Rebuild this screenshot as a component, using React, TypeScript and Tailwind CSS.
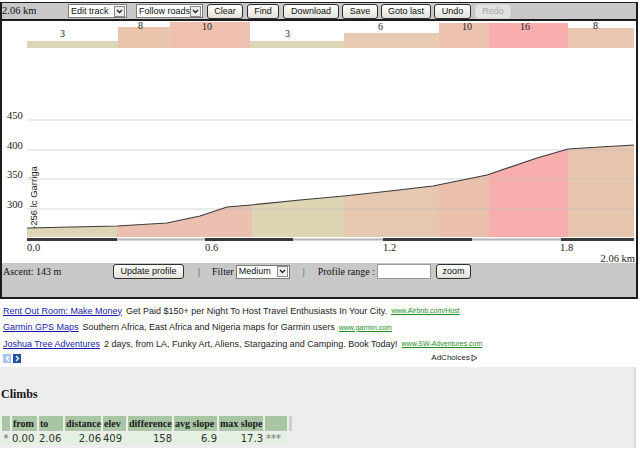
import React from "react";

const serif = "font-['Liberation_Serif','Times_New_Roman',serif]";
const sans = "font-['Liberation_Sans',Arial,sans-serif]";

const bars = [
  { x0: 27, x1: 118, top: 41, label: "3", lx: 60, ly: 37, c: "#ddd5b5" },
  { x0: 118, x1: 170, top: 27, label: "8", lx: 138, ly: 29, c: "#ebc4ae" },
  { x0: 170, x1: 250, top: 22, label: "10", lx: 202, ly: 30, c: "#efbfb0" },
  { x0: 250, x1: 344, top: 41, label: "3", lx: 285, ly: 37, c: "#ddd5b5" },
  { x0: 344, x1: 439, top: 33, label: "6", lx: 378, ly: 30, c: "#e8c9b1" },
  { x0: 439, x1: 489, top: 23, label: "10", lx: 462, ly: 30, c: "#ecc2ae" },
  { x0: 489, x1: 568, top: 23, label: "16", lx: 520, ly: 30, c: "#f9adad" },
  { x0: 568, x1: 634, top: 28, label: "8", lx: 593, ly: 29, c: "#e9c6b0" },
];

const fills: [number, number, string][] = [
  [27, 117, "#ddd5b5"],
  [117, 252, "#ecc0b0"],
  [252, 344, "#ddd5b3"],
  [344, 438, "#e6c8b0"],
  [438, 489, "#ebc1ae"],
  [489, 568, "#f9aeae"],
  [568, 634, "#e7c6af"],
];

const pts: [number, number][] = [
  [27, 228], [117, 226], [167, 223], [200, 216], [227, 207], [251, 205],
  [300, 200], [344, 196], [390, 191], [433, 186], [487, 175], [537, 158],
  [568, 149], [600, 147], [634, 145],
];

const axis: [number, number, boolean][] = [
  [27, 117, true], [117, 205, false], [205, 293, true], [293, 383, false],
  [383, 472, true], [472, 561, false], [561, 634, true],
];

const line = pts.map((p) => p.join(",")).join(" L");
const area = `M27,237 L${line} L634,237 Z`;

function Btn({ children, className = "", disabled = false }: { children: React.ReactNode; className?: string; disabled?: boolean }) {
  return (
    <div
      className={`h-[15px] flex items-center justify-center rounded-[3px] text-[9px] leading-none ${sans} ${
        disabled
          ? "bg-[#e2e2e2] border border-[#d6d6d6] text-[#a8a8a8]"
          : "bg-linear-to-b from-white to-[#e2e2da] border border-[#2f2f2f] text-[#111]"
      } ${className}`}
    >
      {children}
    </div>
  );
}

function Sel({ label, className = "" }: { label: string; className?: string }) {
  return (
    <div className={`h-[14px] flex items-center bg-white border border-[#7c7c7c] ${className}`}>
      <span className={`flex-1 pl-[2px] text-[9px] leading-none text-[#111] whitespace-nowrap overflow-hidden ${sans}`}>{label}</span>
      <span className="w-[11px] h-[11px] mr-[1px] shrink-0 border border-[#8a8a8a] bg-[#ececec] flex items-center justify-center">
        <svg width="7" height="5" viewBox="0 0 7 5">
          <path d="M1 1l2.5 2.5L6 1" stroke="#222" strokeWidth="1.3" fill="none" />
        </svg>
      </span>
    </div>
  );
}

function Ad({ title, text, url }: { title: string; text: string; url: string }) {
  return (
    <div className="h-[16.5px] flex items-center whitespace-nowrap">
      <span className="text-[#1a1aa8] underline">{title}</span>
      <span className="ml-[4px] text-[#222]">{text}</span>
      <span className="ml-[4px] text-[7px] text-[#1f8a1f] underline">{url}</span>
    </div>
  );
}

export default function App() {
  return (
    <div className="w-[640px] h-[454px] bg-white overflow-hidden">
      <div className="w-[638px] mt-[2px] border-t border-l-2 border-r-2 border-b-2 border-[#1c1c1c]">
        {/* toolbar */}
        <div className="h-[16px] bg-[#c8c8c8] border-b-2 border-[#1c1c1c] box-content flex items-center">
          <span className={`w-[66px] text-[10.5px] leading-none text-[#111] ${serif}`}>2.06 km</span>
          <Sel label="Edit track" className="w-[59px]" />
          <Sel label="Follow roads" className="w-[67px] ml-[9px]" />
          <Btn className="w-[36px] ml-[4px]">Clear</Btn>
          <Btn className="w-[32px] ml-[4px]">Find</Btn>
          <Btn className="w-[56px] ml-[4px]">Download</Btn>
          <Btn className="w-[36px] ml-[3px]">Save</Btn>
          <Btn className="w-[50px] ml-[3px]">Goto last</Btn>
          <Btn className="w-[37px] ml-[3px]">Undo</Btn>
          <Btn className="w-[36px] ml-[4px]" disabled>Redo</Btn>
        </div>

        {/* gradient bars + elevation profile */}
        <svg width="634" height="242" viewBox="2 21 634 242" className="block">
          <defs>
            <clipPath id="area">
              <path d={area} />
            </clipPath>
          </defs>
          {bars.map((b, i) => (
            <g key={i}>
              <rect x={b.x0} y={b.top} width={b.x1 - b.x0} height={48 - b.top} fill={b.c} />
              <text x={b.lx} y={b.ly} fontSize="10" fontFamily="Liberation Serif, serif" fill="#222">
                {b.label}
              </text>
            </g>
          ))}

          {[
            ["450", 120],
            ["400", 150],
            ["350", 179],
            ["300", 209],
          ].map(([t, y]) => (
            <text key={t} x="7" y={Number(y) - 1} fontSize="10.5" fontFamily="Liberation Serif, serif" fill="#222">
              {t}
            </text>
          ))}

          <g clipPath="url(#area)">
            {fills.map(([x0, x1, c], i) => (
              <rect key={i} x={x0} y={140} width={x1 - x0} height={100} fill={c} />
            ))}
          </g>

          {[120, 150, 179, 209].map((y) => (
            <line key={y} x1="27" x2="634" y1={y} y2={y} stroke="#bdbdbd" strokeOpacity="0.6" strokeWidth="1" />
          ))}

          <path d={`M${line}`} fill="none" stroke="#3c3c3c" strokeWidth="1.2" />

          <text
            transform="translate(37,229) rotate(-90)"
            fontSize="9.5"
            fontFamily="Liberation Sans, Arial, sans-serif"
            fill="#222"
          >
            -256 lc Garriga
          </text>

          {axis.map(([x0, x1, dark], i) =>
            dark ? (
              <rect key={i} x={x0} y={238} width={x1 - x0} height={3} fill="#3a3a3a" />
            ) : (
              <rect key={i} x={x0} y={238.5} width={x1 - x0} height={2} fill="#b4b4b4" />
            )
          )}

          {[
            ["0.0", 27],
            ["0.6", 205],
            ["1.2", 383],
            ["1.8", 560],
          ].map(([t, x]) => (
            <text key={t} x={x} y="251" fontSize="10.5" fontFamily="Liberation Serif, serif" fill="#222">
              {t}
            </text>
          ))}
          <text x="635" y="262" textAnchor="end" fontSize="10.5" fontFamily="Liberation Serif, serif" fill="#222">
            2.06 km
          </text>
        </svg>

        {/* profile controls */}
        <div className={`h-[34px] bg-[#c8c8c8] flex items-start pt-[1px] text-[10px] text-[#111] ${serif}`}>
          <div className="h-[15px] flex items-center w-[111px] pl-[1px]">Ascent: 143 m</div>
          <Btn className="w-[71px]">Update profile</Btn>
          <div className="h-[15px] flex items-center ml-[14px] text-[#444]">|</div>
          <div className="h-[15px] flex items-center ml-[12px]">Filter</div>
          <Sel label="Medium" className="w-[54px] ml-[2px] mt-[0.5px]" />
          <div className="h-[15px] flex items-center ml-[13px] text-[#444]">|</div>
          <div className="h-[15px] flex items-center ml-[13px]">Profile range :</div>
          <div className="h-[15px] w-[54px] ml-[2px] bg-white border border-[#9a9a9a]" />
          <Btn className="w-[35px] ml-[5px]">zoom</Btn>
        </div>
      </div>

      {/* ads */}
      <div className={`pt-[4px] pl-[3px] text-[9px] ${sans}`}>
        <Ad
          title="Rent Out Room: Make Money"
          text="Get Paid $150+ per Night To Host Travel Enthusiasts In Your City."
          url="www.Airbnb.com/Host"
        />
        <Ad
          title="Garmin GPS Maps"
          text="Southern Africa, East Africa and Nigeria maps for Garmin users"
          url="www.garmin.com"
        />
        <Ad
          title="Joshua Tree Adventures"
          text="2 days, from LA, Funky Art, Aliens, Stargazing and Camping. Book Today!"
          url="www.SW-Adventures.com"
        />
        <div className="h-[11px] flex items-center w-[475px]">
          <span className="w-[8px] h-[9px] bg-[#a9c6ee] flex items-center justify-center">
            <svg width="5" height="7" viewBox="0 0 5 7">
              <path d="M4 1L1.5 3.5 4 6" stroke="#fff" strokeWidth="1.4" fill="none" />
            </svg>
          </span>
          <span className="w-[8px] h-[9px] ml-[2px] bg-[#1f4fa8] flex items-center justify-center">
            <svg width="5" height="7" viewBox="0 0 5 7">
              <path d="M1 1l2.5 2.5L1 6" stroke="#fff" strokeWidth="1.4" fill="none" />
            </svg>
          </span>
          <span className="ml-auto text-[8px] text-[#222]">AdChoices</span>
          <svg width="7" height="8" viewBox="0 0 7 8" className="ml-[1px]">
            <path d="M1 1L6 4 1 7Z" stroke="#333" strokeWidth="0.9" fill="none" />
          </svg>
        </div>
      </div>

      {/* climbs */}
      <div className="mt-[3px] w-[636px] h-[81px] bg-[#ededed] border-r-2 border-[#dcdcdc] pt-[20px]">
        <h2 className={`text-[12px] leading-[14px] font-bold text-[#1a1a1a] pl-[1px] ${serif}`}>Climbs</h2>
        <table className="mt-[13px] border-separate border-spacing-[2px]">
          <thead>
            <tr className={`h-[14px] text-[10px] font-bold text-left text-[#1a1a1a] ${serif}`}>
              <th className="w-[8px] p-0 bg-[#a8c6a4]" />
              <th className="w-[25px] p-0 pl-[1px] bg-[#a8c6a4] font-bold">from</th>
              <th className="w-[24px] p-0 pl-[1px] bg-[#a8c6a4] font-bold">to</th>
              <th className="w-[36px] p-0 pl-[1px] bg-[#a8c6a4] font-bold">distance</th>
              <th className="w-[23px] p-0 pl-[1px] bg-[#a8c6a4] font-bold">elev</th>
              <th className="w-[44px] p-0 pl-[1px] bg-[#a8c6a4] font-bold">difference</th>
              <th className="w-[43px] p-0 pl-[1px] bg-[#a8c6a4] font-bold">avg slope</th>
              <th className="w-[44px] p-0 pl-[1px] bg-[#a8c6a4] font-bold">max slope</th>
              <th className="w-[22px] p-0 bg-[#a8c6a4]" />
              <th className="w-[3px] p-0 bg-[#c9d3c8]" />
            </tr>
          </thead>
          <tbody>
            <tr className="h-[12px] text-[10px] leading-none text-[#333] font-['DejaVu_Sans',Verdana,sans-serif]">
              <td className="p-0 bg-[#e2f0df] text-[#666] text-center">*</td>
              <td className="p-0 bg-[#e2f0df]">0.00</td>
              <td className="p-0 bg-[#e2f0df]">2.06</td>
              <td className="p-0 bg-[#e2f0df] text-right">2.06</td>
              <td className="p-0 bg-[#e2f0df]">409</td>
              <td className="p-0 bg-[#e2f0df] text-right">158</td>
              <td className="p-0 bg-[#e2f0df] text-right">6.9</td>
              <td className="p-0 bg-[#e2f0df] text-right">17.3</td>
              <td className="p-0 bg-[#e2f0df] text-[#777] pl-[1px]">***</td>
              <td className="p-0" />
            </tr>
          </tbody>
        </table>
      </div>
    </div>
  );
}
